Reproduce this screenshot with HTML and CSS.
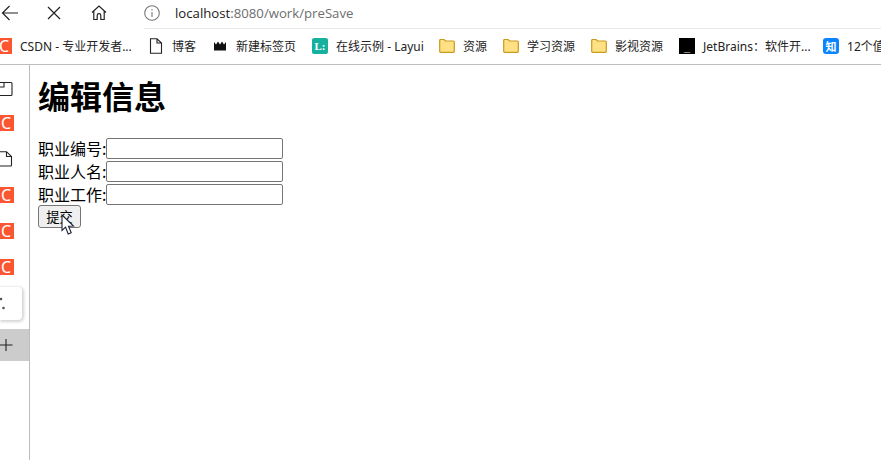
FILE: index.html
```html
<!DOCTYPE html>
<html lang="zh">
<head>
<meta charset="utf-8">
<title>编辑信息</title>
<link rel="stylesheet" href="styles.css">
</head>
<body>
<div class="toolbar">
  <svg class="tool back" width="18" height="16" viewBox="0 0 18 16"><path d="M17 8H1.500M8.500 1 1.500 8l7 7" fill="none" stroke="#222" stroke-width="1.200"/></svg>
  <svg class="tool close" width="14" height="14" viewBox="0 0 14 14"><path d="M1 1l12 12M13 1 1 13" fill="none" stroke="#222" stroke-width="1.200"/></svg>
  <svg class="tool home" width="16" height="16" viewBox="0 0 16 16"><path d="M1 7.500 8 1l7 6.500M2.800 6v8.500H6.200V10.500a1.800 1.800 0 0 1 3.600 0V14.500h3.400V6" fill="none" stroke="#222" stroke-width="1.200"/></svg>
  <div class="address">
    <svg width="16" height="16" viewBox="0 0 16 16"><circle cx="8" cy="8" r="7.300" fill="none" stroke="#777" stroke-width="1.100"/><path d="M8 7v5M8 4v1.500" stroke="#777" stroke-width="1.100"/></svg>
    <span class="url">localhost<span class="url-rest">:8080/work/preSave</span></span>
  </div>
</div>
<div class="bookmarks">
  <div class="mark"><span class="csdn">C</span><span class="clip-csdn">CSDN - 专业开发者...</span></div>
  <div class="mark"><svg width="16" height="16" viewBox="0 0 16 16"><path d="M2.500 .800h6.500L13.500 5v10.200H2.500zM9 .800V5h4.500" fill="none" stroke="#222" stroke-width="1.100"/></svg><span>博客</span></div>
  <div class="mark"><svg width="16" height="16" viewBox="0 0 16 16"><path d="M2 4l2 2.500L6 3.500l2 3 2-3 2 3L14 4v8.500H2z" fill="#111"/></svg><span>新建标签页</span></div>
  <div class="mark"><span class="layui">L:</span><span class="clip-layui">在线示例 - Layui</span></div>
  <div class="mark"><svg width="16" height="16" viewBox="0 0 16 16"><path d="M.700 2.500q0-1 1-1h3.300l1.500 1.500h7.800q1 0 1 1v9.300q0 1-1 1H1.700q-1 0-1-1z" fill="#ffe083" stroke="#c99a1d" stroke-width="1.200"/></svg><span>资源</span></div>
  <div class="mark"><svg width="16" height="16" viewBox="0 0 16 16"><path d="M.700 2.500q0-1 1-1h3.300l1.500 1.500h7.800q1 0 1 1v9.300q0 1-1 1H1.700q-1 0-1-1z" fill="#ffe083" stroke="#c99a1d" stroke-width="1.200"/></svg><span>学习资源</span></div>
  <div class="mark"><svg width="16" height="16" viewBox="0 0 16 16"><path d="M.700 2.500q0-1 1-1h3.300l1.500 1.500h7.800q1 0 1 1v9.300q0 1-1 1H1.700q-1 0-1-1z" fill="#ffe083" stroke="#c99a1d" stroke-width="1.200"/></svg><span>影视资源</span></div>
  <div class="mark"><span class="jb">_</span><span class="clip-jb">JetBrains：软件开...</span></div>
  <div class="mark"><span class="zhi">知</span><span>12个值</span></div>
</div>
<div class="body">
  <aside class="side">
    <div class="side-items">
      <svg class="side-icon first" width="16" height="16" viewBox="0 0 16 16"><path d="M0 1.500h11q1 0 1 1v11q0 1-1 1H0M0 6h4V1.500" fill="none" stroke="#222" stroke-width="1.100"/></svg>
      <span class="csdn side-c">C</span>
      <svg class="side-icon" width="16" height="16" viewBox="0 0 16 16"><path d="M0 .700h6.500L11.500 5.500V14q0 1-1 1H0M6.500 .700v4.800h5" fill="none" stroke="#222" stroke-width="1.100"/></svg>
      <span class="csdn side-c">C</span>
      <span class="csdn side-c">C</span>
      <span class="csdn side-c">C</span>
    </div>
    <div class="side-card"><svg width="6" height="14" viewBox="0 0 6 14"><circle cx="1" cy="2" r="1.300" fill="#555"/><circle cx="3.500" cy="11" r="1.300" fill="#555"/></svg></div>
    <div class="side-add"><svg width="14" height="14" viewBox="0 0 14 14"><path d="M0 7h12.500M6 1v12" stroke="#222" stroke-width="1.100" fill="none"/></svg></div>
  </aside>
  <main class="page">
    <h1>编辑信息</h1>
    <form>
      <label class="row">职业编号:<input type="text"></label>
      <label class="row">职业人名:<input type="text"></label>
      <label class="row">职业工作:<input type="text"></label>
      <button type="button">提交</button>
    </form>
  </main>
</div>
<svg class="cursor" width="15" height="22" viewBox="0 0 15 22"><path d="M1 1v15.500l3.600-3.300 2.600 6.800 3-1.200-2.700-6.500 5-.3z" fill="#fff" stroke="#1d2438" stroke-width="1.100"/></svg>
</body>
</html>
```
FILE: styles.css
```css
html, body { margin: 0; padding: 0; width: 881px; height: 460px; overflow: hidden; background: #fff; }
body { position: relative; font-family: "Liberation Serif", "Noto Sans CJK SC", serif; color: #000; }

.toolbar { display: flex; align-items: center; height: 29px; box-sizing: border-box; padding-left: 1px; }
.tool { flex: none; margin-top: -3px; }
.close { margin-left: 28px; }
.home { margin-left: 30px; }
.address { display: flex; align-items: center; gap: 15px; flex: 1; box-sizing: border-box; height: 29px; margin-left: 37px; padding: 0 0 2px; border-bottom: 1px solid #e8e8e8; }
.url { font-family: "Open Sans", "Noto Sans", sans-serif; font-size: 13.200px; color: #1a1a1a; }
.url-rest { color: #6e6e6e; }

.bookmarks { display: flex; align-items: center; gap: 16px; height: 36px; margin-left: -4px; padding-bottom: 1px; overflow: hidden; border-bottom: 1px solid #bdbdbd; width: 885px; box-sizing: border-box; white-space: nowrap; font-size: 12px; color: #222; }
.mark { display: flex; align-items: center; gap: 8px; flex: none; }
.mark svg { flex: none; }
.mark > span:last-child { font-family: "Noto Sans", "Noto Sans CJK SC", sans-serif; }
.clip-csdn { width: 112px; }
.clip-layui { width: 87px; }
.clip-jb { width: 104px; }
.csdn { display: flex; align-items: center; justify-content: center; flex: none; width: 16px; height: 16px; background: #fc5531; color: #fff; font: 400 16px "Noto Sans", sans-serif; }
.layui { display: flex; align-items: center; justify-content: center; flex: none; width: 16px; height: 16px; border-radius: 2px; background: #16b09f; color: #fff; font: 700 11px "Liberation Serif", serif; }
.jb { display: flex; align-items: flex-end; justify-content: center; flex: none; width: 16px; height: 16px; background: #000; color: #fff; font: 700 11px/14px "Liberation Sans", sans-serif; }
.zhi { display: flex; align-items: center; justify-content: center; flex: none; width: 16px; height: 16px; border-radius: 3px; background: #0a84ff; color: #fff; font: 700 11px "Noto Sans CJK SC", sans-serif; }

.body { display: flex; height: 395px; }
.side { flex: none; display: flex; flex-direction: column; width: 30px; box-sizing: border-box; border-right: 1px solid #bdbdbd; overflow: hidden; }
.side-items { display: flex; flex-direction: column; gap: 20px; padding-top: 16px; }
.side-icon { display: block; }
.first { margin-bottom: -2px; }
.side-c { margin-left: -2px; }
.side-card { display: flex; align-items: center; flex: none; width: 22px; height: 33px; box-sizing: border-box; margin-top: 12px; background: #fff; border-radius: 0 4px 4px 0; box-shadow: 1px 1px 3px 1px #d4d4d4; }
.side-add { display: flex; align-items: center; flex: none; height: 32px; margin-top: 9px; background: #ccc; }

.page { flex: 1; padding: 12px 8px 0; font-size: 16px; }
h1 { margin: 0 0 23px; font-size: 32px; line-height: 37px; font-weight: 700; font-family: "Noto Sans CJK SC", sans-serif; }
.row { display: flex; align-items: center; height: 23px; line-height: 21px; font-family: "Noto Sans CJK SC", sans-serif; font-size: 16px; }
input { box-sizing: border-box; width: 177px; height: 21px; margin: 0; padding: 1px 2px; border: 1px solid #767676; border-radius: 2px; background: #fff; }
button { display: block; box-sizing: border-box; width: 43px; height: 23px; margin: -1px 0 0; padding: 0; border: 1px solid #767676; border-radius: 3px; background: #efefef; font: 13.330px "Noto Sans CJK SC", sans-serif; color: #000; }
.cursor { position: absolute; left: 61px; top: 214px; }
```
